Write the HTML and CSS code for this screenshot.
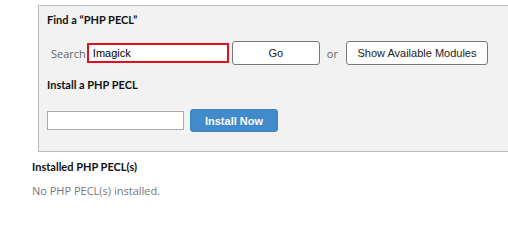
FILE: index.html
```html
<html>
<head>
<meta http-equiv="Content-Type" content="text/html; charset=UTF-8" />
<link rel="stylesheet" href="styles.css">
</head>
<body>

<div class="panel">
	<h3 class="title">Find a “PHP PECL”</h3>
	<div class="search-row">
		<label for="search" class="search-label">Search</label>
		<input type="text" id="search" class="search-input" value="Imagick">
		<button type="button" class="btn btn-go">Go</button>
		<span class="or">or</span>
		<button type="button" class="btn btn-show">Show Available Modules</button>
	</div>

	<h3 class="title install-title">Install a PHP PECL</h3>
	<div class="install-row">
		<input type="text" class="install-input" value="">
		<button type="button" class="btn-primary">Install Now</button>
	</div>
</div>

<div class="installed">
	<h3 class="title">Installed PHP PECL(s)</h3>
	<p class="empty">No PHP PECL(s) installed.</p>
</div>

</body>
</html>
```

FILE: styles.css
```css
html {
	overflow: hidden;
}
body {
	margin: 0;
	background-color: #ffffff;
	font-family: "Open Sans", sans-serif;
	font-size: 11px;
	color: #333333;
}
.panel {
	margin: 5px -20px 0 38px;
	padding: 7px 8px 19px 8px;
	background-color: #f2f2f2;
	border: 1px solid #bbbbbb;
}
.title {
	margin: 0;
	font-family: Lato, "Open Sans", sans-serif;
	font-size: 11px;
	font-weight: 700;
	color: #111111;
	line-height: 14px;
}
.search-row {
	display: flex;
	align-items: center;
	margin-top: 14px;
	padding-left: 4px;
}
.search-row > * {
	flex-shrink: 0;
}
.search-label {
	color: #666666;
	font-size: 11px;
	margin-right: 1px;
}
.search-input {
	width: 142px;
	height: 20px;
	border: 2px solid #e0101c;
	box-sizing: border-box;
	padding: 0 4px;
	margin: 0;
	font-family: "Liberation Sans", Arial, sans-serif;
	font-size: 11px;
	color: #000000;
	background: #ffffff;
	outline: none;
}
.btn {
	height: 24px;
	border: 1px solid #777777;
	border-radius: 3px;
	background-color: #ffffff;
	font-family: "Liberation Sans", Arial, sans-serif;
	font-size: 11px;
	color: #222222;
	padding: 0;
	margin: 0;
	white-space: nowrap;
}
.btn-go {
	width: 88px;
	margin-left: 3px;
}
.or {
	color: #666666;
	font-size: 11px;
	margin: 0 8px 0 7px;
}
.btn-show {
	width: 142px;
}
.install-title {
	margin-top: 13px;
}
.install-row {
	display: flex;
	align-items: center;
	margin-top: 17px;
}
.install-input {
	width: 137px;
	height: 19px;
	border: 1px solid #aaaaaa;
	box-sizing: border-box;
	background: #ffffff;
	margin: 0;
}
.btn-primary {
	width: 88px;
	height: 23px;
	margin: 0 0 0 6px;
	border: 1px solid #3d84c6;
	border-radius: 3px;
	background-color: #428bca;
	color: #ffffff;
	font-family: "Liberation Sans", Arial, sans-serif;
	font-weight: bold;
	font-size: 11px;
	padding: 0;
}
.installed {
	padding: 8px 0 0 32px;
}
.empty {
	margin: 10px 0 0 0;
	color: #777777;
	font-size: 11px;
	line-height: 14px;
}
```
